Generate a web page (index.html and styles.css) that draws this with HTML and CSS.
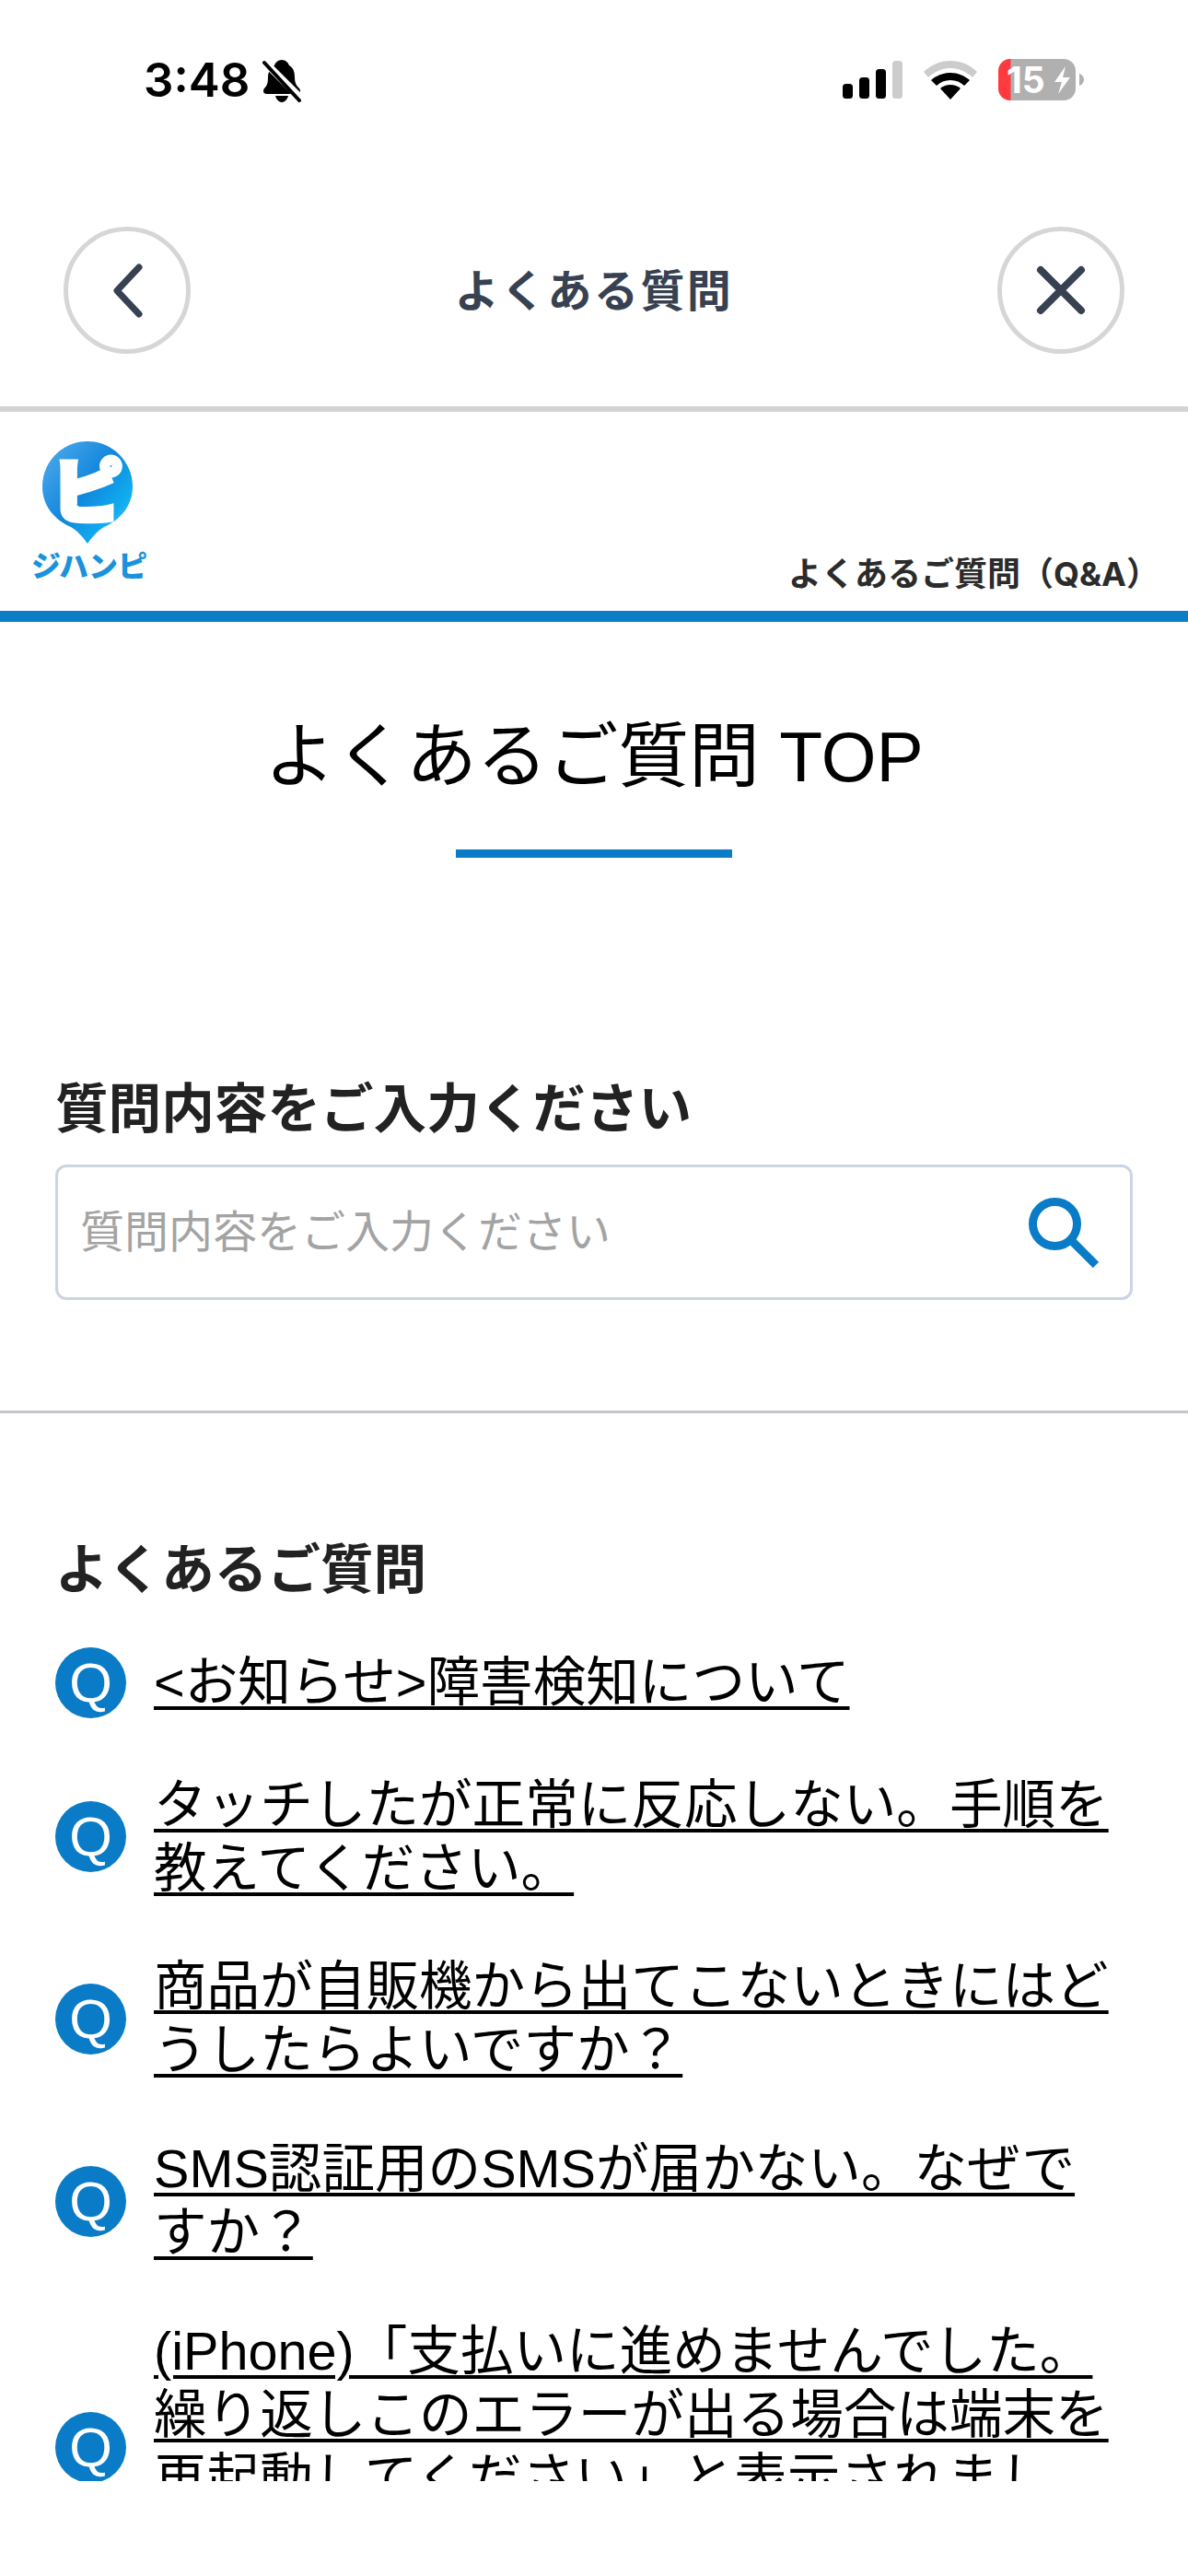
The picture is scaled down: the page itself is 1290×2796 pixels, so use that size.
FILE: index.html
```html
<!DOCTYPE html>
<html lang="ja">
<head>
<meta charset="utf-8">
<title>よくあるご質問</title>
<link rel="stylesheet" href="styles.css">
</head>
<body>
<div class="status">
  <div class="status-left">
    <span class="time">3:48</span>
    <svg class="bell" width="42" height="46" viewBox="0 0 42 46">
      <path fill="#000" d="M21 0c4 0 7 3 8 6 5 3 6 8 6 13 0 6 2 9 5 12 2 3 1 6-3 6H5c-4 0-5-3-3-6 3-3 4-6 4-12 0-5 2-10 7-13 1-3 4-6 8-6z"/>
      <path fill="#000" d="M14 39h14c-1 4-4 7-7 7s-6-3-7-7z"/>
      <path stroke="#fff" stroke-width="8" d="M0 0l42 42"/>
      <path stroke="#000" stroke-width="4" stroke-linecap="round" d="M2 3l38 41"/>
    </svg>
  </div>
  <div class="status-right">
    <svg class="signal" width="65" height="41" viewBox="0 0 65 41">
      <rect x="0" y="25" width="11" height="16" rx="3.500" fill="#000"/>
      <rect x="18" y="18" width="11" height="23" rx="3.500" fill="#000"/>
      <rect x="36" y="9" width="11" height="32" rx="3.500" fill="#000"/>
      <rect x="54" y="0" width="11" height="41" rx="3.500" fill="#ccc"/>
    </svg>
    <svg class="wifi" width="58" height="42" viewBox="0 0 58 42">
      <path fill="#ccc" d="M29 0c11 0 21 4 29 12l-5 6C47 12 38 8 29 8S11 12 5 18L0 12C8 4 18 0 29 0z"/>
      <path fill="#000" d="M29 13c8 0 15 3 21 8l-6 6C40 23 35 21 29 21S18 23 14 27L8 21C14 16 21 13 29 13z"/>
      <path fill="#000" d="M29 26c4 0 8 1.500 11 4L29 42 18 30c3-2.500 7-4 11-4z"/>
    </svg>
    <svg class="battery" width="93" height="45" viewBox="0 0 93 45">
      <rect x="0" y="0" width="84" height="45" rx="13" fill="#b0b0b0"/>
      <path fill="#ff3b3f" d="M13 0h0.500v45H13C6 45 0 39 0 32V13C0 6 6 0 13 0z"/>
      <path fill="#b0b0b0" d="M88 16c3 1 5 3.500 5 6.500s-2 5.500-5 6.500z"/>
      <text class="battery-num" x="9" y="37">15</text>
      <path fill="#fff" d="M73 8L61 25h8l-4 13 13-18h-8z"/>
    </svg>
  </div>
</div>

<nav class="nav">
  <div class="circle-btn">
    <svg width="128" height="128" viewBox="0 0 128 128"><path d="M77 39L53 64.500 77 90" fill="none" stroke="#374151" stroke-width="7" stroke-linecap="round" stroke-linejoin="round"/></svg>
  </div>
  <div class="nav-title">よくある質問</div>
  <div class="circle-btn">
    <svg width="128" height="128" viewBox="0 0 128 128"><path d="M42 42L86 86M86 42L42 86" fill="none" stroke="#374151" stroke-width="8" stroke-linecap="round"/></svg>
  </div>
</nav>

<header class="site-header">
  <svg class="logo" width="130" height="155" viewBox="0 0 130 155">
    <defs>
      <linearGradient id="pin" x1="0" y1="0" x2="1" y2="0.9">
        <stop offset="0" stop-color="#54aeee"/>
        <stop offset="0.5" stop-color="#1186dc"/>
        <stop offset="0.8" stop-color="#10aef0"/>
        <stop offset="1" stop-color="#66c4fb"/>
      </linearGradient>
    </defs>
    <path fill="url(#pin)" d="M60 4c27 0 49 22 49 49 0 21-13 36-31 44-7 4-13 11-18 18-5-7-11-14-18-18-18-8-31-23-31-44C11 26 33 4 60 4z"/>
    <text class="logo-pi" x="22" y="86">ピ</text>
    <text class="logo-name" x="-1" y="151">ジハンピ</text>
  </svg>
  <div class="site-label">よくあるご質問（Q&amp;A）</div>
</header>

<main class="main">
  <h1 class="page-title">よくあるご質問 TOP</h1>
  <div class="title-rule"></div>

  <section class="search">
    <label class="field-label" for="q">質問内容をご入力ください</label>
    <div class="search-box">
      <input class="search-input" id="q" type="text" placeholder="質問内容をご入力ください">
      <svg class="search-icon" width="76" height="76" viewBox="0 0 76 76">
        <circle cx="28.500" cy="28.500" r="24" fill="none" stroke="#0a7cc7" stroke-width="9"/>
        <path d="M47 47l26 26" fill="none" stroke="#0a7cc7" stroke-width="9"/>
      </svg>
    </div>
  </section>

  <div class="divider"></div>

  <section class="faq">
    <h2 class="faq-heading">よくあるご質問</h2>
    <ul class="faq-list">
      <li class="faq-item"><span class="q-badge">Q</span><a class="faq-link" href="#">&lt;お知らせ&gt;障害検知について</a></li>
      <li class="faq-item"><span class="q-badge">Q</span><a class="faq-link" href="#">タッチしたが正常に反応しない。手順を教えてください。</a></li>
      <li class="faq-item"><span class="q-badge">Q</span><a class="faq-link" href="#">商品が自販機から出てこないときにはどうしたらよいですか？</a></li>
      <li class="faq-item"><span class="q-badge">Q</span><a class="faq-link" href="#">SMS認証用のSMSが届かない。なぜですか？</a></li>
      <li class="faq-item"><span class="q-badge">Q</span><a class="faq-link" href="#">(iPhone)「支払いに進めませんでした。繰り返しこのエラーが出る場合は端末を再起動してください」と表示されました。どうすればよいですか？</a></li>
    </ul>
  </section>
</main>
</body>
</html>
```
FILE: styles.css
```css
* { box-sizing: border-box; }
html, body { margin: 0; padding: 0; background: #fff; }
body {
  width: 1290px;
  height: 2796px;
  overflow: hidden;
  display: flex;
  flex-direction: column;
  font-family: "Liberation Sans", "Noto Sans CJK JP", sans-serif;
  color: #000;
}

/* status bar */
.status {
  height: 130px;
  flex: none;
  display: flex;
  justify-content: space-between;
  padding: 64px 113px 0 156px;
}
.status-left { display: flex; align-items: flex-start; gap: 14px; }
.time {
  font-family: Inter, "Liberation Sans", sans-serif;
  font-weight: 600;
  font-size: 51px;
  line-height: 45px;
}
.bell { margin-top: 1px; }
.status-right { display: flex; align-items: flex-start; gap: 23px; }
.signal, .wifi { margin-top: 2px; }
.battery-num {
  font-family: Inter, "Liberation Sans", sans-serif;
  font-weight: 700;
  font-size: 39px;
  fill: #fff;
}

/* navigation */
.nav {
  flex: none;
  height: 317px;
  padding: 116px 69px 57px;
  border-bottom: 6px solid #d2d3d5;
  display: flex;
  justify-content: space-between;
  align-items: center;
}
.circle-btn {
  width: 138px;
  height: 138px;
  border: 5px solid #d5d6d8;
  border-radius: 50%;
  display: flex;
  align-items: center;
  justify-content: center;
}
.nav-title {
  font-family: "Noto Sans CJK JP", sans-serif;
  font-weight: 700;
  font-size: 48px;
  letter-spacing: 2.4px;
  color: #374151;
  margin-bottom: 6px;
}

/* site header */
.site-header {
  flex: none;
  height: 228px;
  border-bottom: 12px solid #0b7fc5;
  display: flex;
  justify-content: space-between;
  padding: 28px 28px 0 35px;
}
.logo { overflow: visible; }
.logo-pi {
  font-family: "Noto Sans CJK JP", sans-serif;
  font-weight: 900;
  font-size: 76px;
  fill: #fff;
  stroke: #fff;
  stroke-width: 6px;
}
.logo-name {
  font-family: "Noto Sans CJK JP", sans-serif;
  font-weight: 900;
  font-size: 32px;
  fill: #1a92dc;
}
.site-label {
  align-self: flex-end;
  font-family: Inter, "Noto Sans CJK JP", sans-serif;
  font-weight: 700;
  font-size: 36px;
  line-height: 52px;
  color: #2b2b2b;
  margin-bottom: 14px;
  margin-right: 3px;
}

/* main */
.main {
  flex: 1;
  min-height: 0;
  overflow: hidden;
  margin-bottom: 103px;
  display: flex;
  flex-direction: column;
}
.page-title {
  margin: 100px 0 0;
  font-weight: 400;
  font-size: 76.8px;
  line-height: 92px;
  text-align: center;
}
.title-rule {
  width: 300px;
  height: 9px;
  margin: 55px auto 0;
  background: #0a7cc7;
  flex: none;
}
.search { margin: 234px 60px 0; flex: none; }
.field-label {
  display: block;
  font-family: "Noto Sans CJK JP", sans-serif;
  font-weight: 700;
  font-size: 57.6px;
  line-height: 69px;
  color: #222;
}
.search-box {
  margin-top: 30px;
  height: 147px;
  border: 3px solid #cbd5e1;
  border-radius: 12px;
  display: flex;
  align-items: center;
  padding: 0 34px 0 24px;
}
.search-input {
  flex: 1;
  min-width: 0;
  border: 0;
  outline: 0;
  padding: 0;
  background: transparent;
  font-family: "Liberation Sans", "Noto Sans CJK JP", sans-serif;
  font-size: 48px;
}
.search-input::placeholder { color: #a3a3a3; opacity: 1; }
.search-icon { flex: none; }
.divider {
  flex: none;
  height: 3px;
  margin-top: 120px;
  background: #c2c5c9;
}

/* faq */
.faq { margin: 131px 60px 0; flex: none; }
.faq-heading {
  margin: 0;
  font-family: "Noto Sans CJK JP", sans-serif;
  font-weight: 700;
  font-size: 57.6px;
  line-height: 69px;
  color: #222;
}
.faq-list {
  list-style: none;
  margin: 54px 0 0;
  padding: 0 15px 0 0;
  display: flex;
  flex-direction: column;
  gap: 59.5px;
}
.faq-item {
  display: flex;
  align-items: center;
  gap: 30px;
}
.q-badge {
  flex: none;
  width: 77px;
  height: 77px;
  border-radius: 50%;
  background: #0a7cc7;
  color: #fff;
  font-size: 60px;
  line-height: 77px;
  text-align: center;
}
.faq-link {
  color: #000;
  font-size: 57.6px;
  line-height: 69.12px;
  text-decoration: underline;
  text-decoration-thickness: 4px;
  text-underline-offset: 6px;
}
```
